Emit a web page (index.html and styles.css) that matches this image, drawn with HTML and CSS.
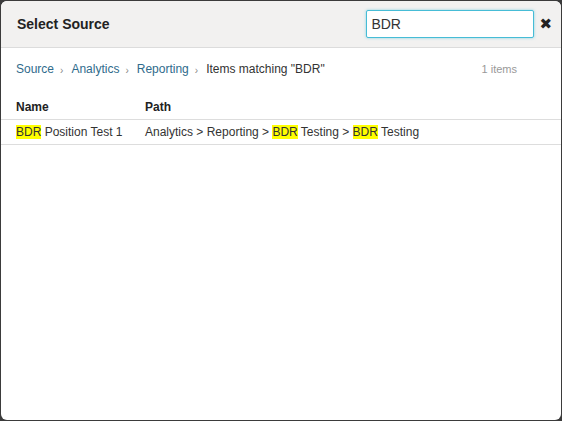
FILE: index.html
```html
<!DOCTYPE html>
<html>
<head>
<meta charset="utf-8">
<link rel="stylesheet" href="styles.css">
</head>
<body>
<div class="dialog">
  <div class="header">
    <div class="title">Select Source</div>
    <input class="search" type="text" value="BDR">
    <span class="close">✖</span>
  </div>
  <div class="crumbs">
    <a class="crumb">Source</a><span class="sep">›</span>
    <a class="crumb">Analytics</a><span class="sep">›</span>
    <a class="crumb">Reporting</a><span class="sep">›</span>
    <span class="current">Items matching "BDR"</span>
    <span class="count">1 items</span>
  </div>
  <table class="grid">
    <thead>
      <tr><th class="c-name">Name</th><th>Path</th></tr>
    </thead>
    <tbody>
      <tr>
        <td class="c-name"><mark>BDR</mark> Position Test 1</td>
        <td>Analytics &gt; Reporting &gt; <mark>BDR</mark> Testing &gt; <mark>BDR</mark> Testing</td>
      </tr>
    </tbody>
  </table>
</div>
</body>
</html>
```
FILE: styles.css
```css
html, body {
  margin: 0;
  padding: 0;
  height: 100%;
}
body {
  background: #3b3b3b;
  font-family: "Liberation Sans", Arial, sans-serif;
  font-size: 12px;
  color: #333;
  padding: 1px 1px 1px 1px;
  box-sizing: border-box;
}
.dialog {
  background: #fff;
  height: 100%;
  border-radius: 6px;
  overflow: hidden;
}
.header {
  display: flex;
  align-items: center;
  height: 47px;
  background: #f2f1f0;
  border-bottom: 1px solid #dcdcdc;
  padding: 0 9px 0 16px;
  box-sizing: border-box;
}
.title {
  flex: 1;
  font-weight: bold;
  font-size: 14px;
  color: #222;
}
.search {
  width: 168px;
  height: 28px;
  box-sizing: border-box;
  border: 1px solid #46bcd6;
  border-radius: 2px;
  box-shadow: 0 0 3px rgba(70, 188, 214, 0.6);
  font-family: "Liberation Sans", Arial, sans-serif;
  font-size: 14px;
  color: #333;
  padding: 0 4px;
  margin-top: 0;
  outline: none;
}
.close {
  font-size: 15px;
  color: #222;
  margin-left: 5px;
  font-family: "DejaVu Sans", sans-serif;
  font-weight: bold;
}
.crumbs {
  display: flex;
  align-items: center;
  height: 42px;
  padding: 0 15px;
}
.crumb {
  color: #2f6b8c;
}
.sep {
  font-size: 10px;
  color: #888;
  margin: 2px 8px 0 6px;
}
.current {
  color: #333;
}
.count {
  margin-left: auto;
  color: #999;
  font-size: 11px;
  margin-right: 29px;
}
.grid {
  width: 100%;
  border-collapse: collapse;
  margin-top: 5px;
}
.grid th {
  text-align: left;
  font-weight: bold;
  color: #222;
  height: 24px;
  padding: 0;
  border-bottom: 1px solid #ddd;
}
.grid td {
  height: 24px;
  padding: 0;
  color: #333;
  border-bottom: 1px solid #ddd;
}
.grid .c-name {
  width: 129px;
  padding-left: 15px;
}
mark {
  background: #ffff00;
  color: #333;
}
```
